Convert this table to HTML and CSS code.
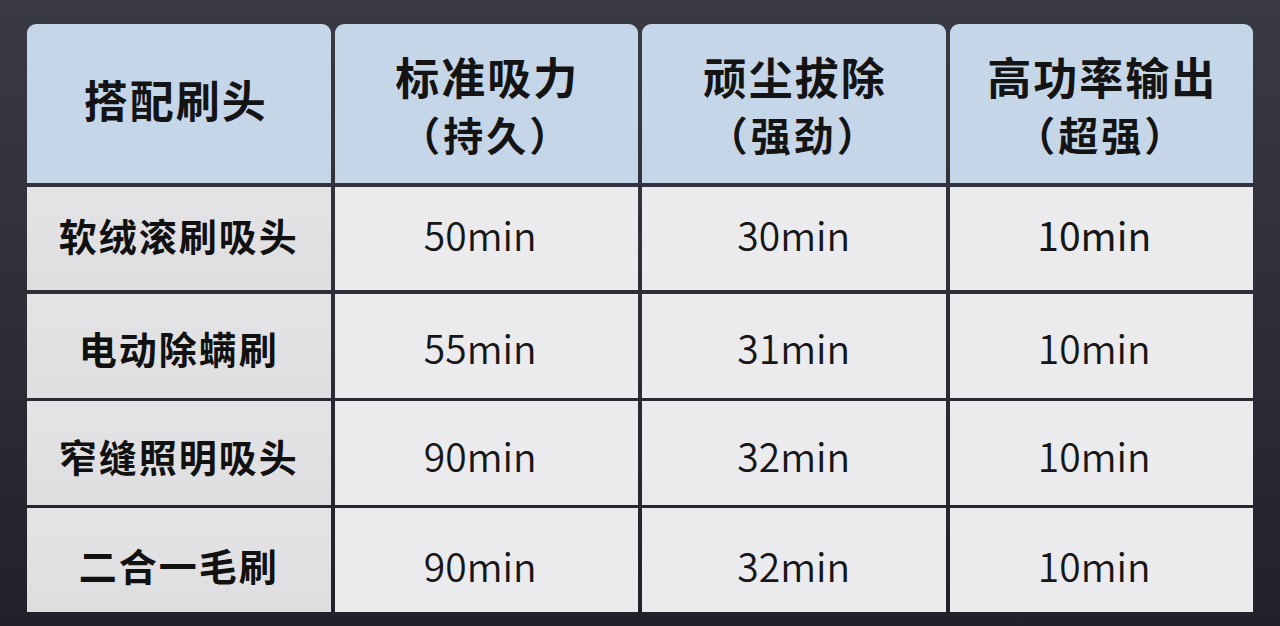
FILE: index.html
```html
<!DOCTYPE html>
<html lang="zh-CN">
<head>
<meta charset="utf-8">
<title>吸头续航对比</title>
<link rel="stylesheet" href="styles.css">
</head>
<body>
<div class="page">
  <div class="table">
    <div class="head head-single"><span class="h1">搭配刷头</span></div>
    <div class="head"><span class="h1">标准吸力</span><span class="h2">（持久）</span></div>
    <div class="head"><span class="h1">顽尘拔除</span><span class="h2">（强劲）</span></div>
    <div class="head"><span class="h1">高功率输出</span><span class="h2">（超强）</span></div>

    <div class="cell name r1">软绒滚刷吸头</div>
    <div class="cell r1 c2">50min</div>
    <div class="cell r1">30min</div>
    <div class="cell r1 c4 strong">10min</div>

    <div class="cell name r2">电动除螨刷</div>
    <div class="cell r2 c2">55min</div>
    <div class="cell r2">31min</div>
    <div class="cell r2 c4">10min</div>

    <div class="cell name r3">窄缝照明吸头</div>
    <div class="cell r3 c2">90min</div>
    <div class="cell r3">32min</div>
    <div class="cell r3 c4">10min</div>

    <div class="cell name r4">二合一毛刷</div>
    <div class="cell r4 c2">90min</div>
    <div class="cell r4">32min</div>
    <div class="cell r4 c4">10min</div>
  </div>
</div>
</body>
</html>
```
FILE: styles.css
```css
html, body {
  margin: 0;
  padding: 0;
}
body {
  width: 1280px;
  height: 626px;
  overflow: hidden;
  background: linear-gradient(180deg, #3a3a44 0%, #2f2f39 45%, #21212b 100%);
  font-family: "Noto Sans CJK SC", "Noto Sans", sans-serif;
  color: #141414;
}
.page {
  padding: 24px 27px 0 27px;
}
.table {
  display: grid;
  grid-template-columns: repeat(4, 1fr);
  grid-template-rows: 159px repeat(4, 103.75px);
  column-gap: 4px;
  row-gap: 3.5px;
}
.head {
  background: #c6d6e9;
  border-radius: 9px 9px 0 0;
  display: flex;
  flex-direction: column;
  align-items: center;
  justify-content: center;
  padding-top: 2px;
  box-sizing: border-box;
}
.head-single {
  padding-top: 0;
  padding-bottom: 10px;
  padding-right: 8px;
}
.h1 {
  font-size: 44px;
  font-weight: 700;
  line-height: 58px;
  letter-spacing: 2px;
  margin-right: -2px;
}
.h2 {
  font-size: 40px;
  font-weight: 700;
  line-height: 58px;
  letter-spacing: 3px;
}
.cell {
  background: #ebeaec;
  display: flex;
  align-items: center;
  justify-content: center;
  box-sizing: border-box;
  font-size: 39px;
  font-weight: 350;
  color: #161616;
  line-height: 1;
}
.cell.c2 {
  padding-right: 12px;
}
.cell.c4 {
  padding-right: 14px;
}
.cell.name {
  background: linear-gradient(180deg, #e4e3e5, #dedddf);
  font-size: 38px;
  font-weight: 700;
  letter-spacing: 2px;
  color: #111;
}
.cell.strong {
  font-weight: 400;
}
.r1 { padding-bottom: 7px; }
.r2 { padding-top: 4px; }
.r3 { padding-top: 6px; }
.r4 { padding-top: 10px; }
```
